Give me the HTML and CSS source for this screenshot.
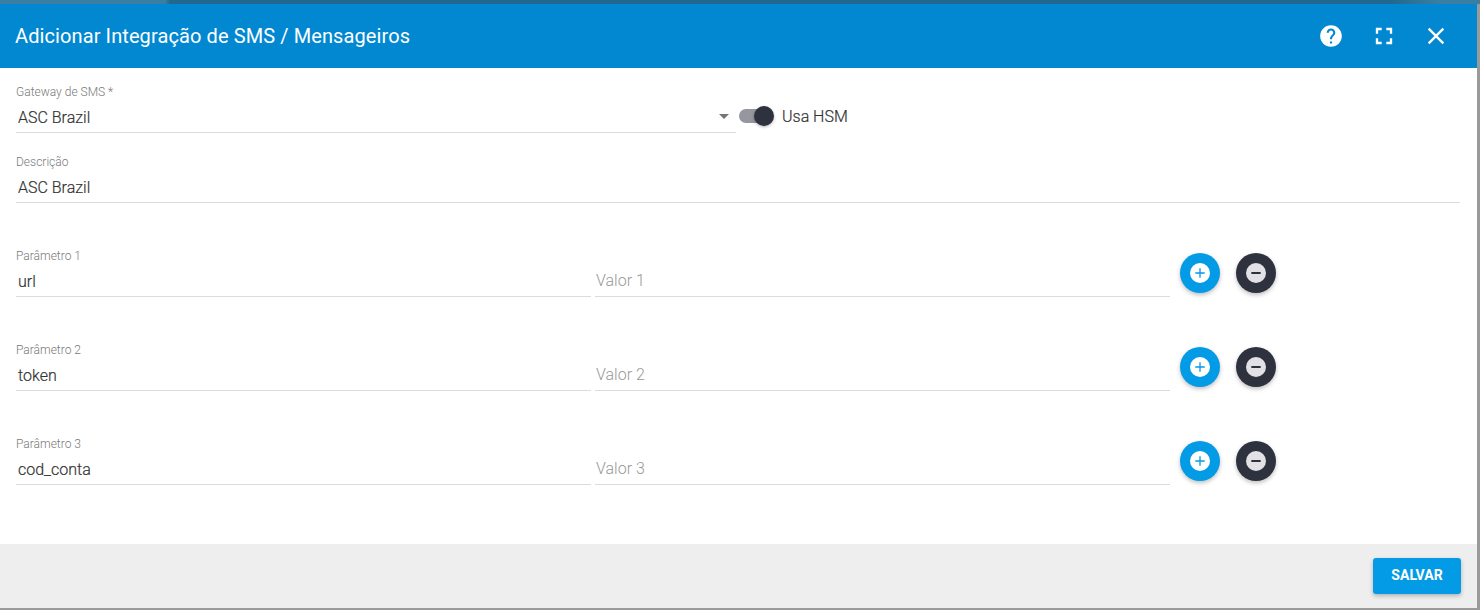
FILE: index.html
```html
<!DOCTYPE html>
<html lang="pt-BR">
<head>
    <meta charset="UTF-8">
    <title>Adicionar Integração</title>
    <link rel="stylesheet" href="styles.css">
</head>
<body>
    <div class="dialog">
        <header class="dialog-header">
            <h1>Adicionar Integração de SMS / Mensageiros</h1>
            <div class="header-icons">
                <svg class="icon icon-help" viewBox="0 0 24 24"><path fill="#fff" d="M12 2C6.48 2 2 6.48 2 12s4.48 10 10 10 10-4.48 10-10S17.52 2 12 2zm1 17h-2v-2h2v2zm2.07-7.75l-.9.92C13.45 12.9 13 13.5 13 15h-2v-.5c0-1.1.45-2.1 1.17-2.83l1.24-1.26c.37-.36.59-.86.59-1.41 0-1.1-.9-2-2-2s-2 .9-2 2H8c0-2.21 1.79-4 4-4s4 1.79 4 4c0 .88-.36 1.68-.93 2.25z"/></svg>
                <svg class="icon" viewBox="0 0 24 24"><path fill="#fff" d="M7 14H5v5h5v-2H7v-3zm-2-4h2V7h3V5H5v5zm12 7h-3v2h5v-5h-2v3zM14 5v2h3v3h2V5h-5z"/></svg>
                <svg class="icon" viewBox="0 0 24 24"><path fill="#fff" d="M19 6.41L17.59 5 12 10.59 6.41 5 5 6.41 10.59 12 5 17.59 6.41 19 12 13.41 17.59 19 19 17.59 13.41 12z"/></svg>
            </div>
        </header>

        <form class="dialog-body">
            <div class="row">
                <div class="field field-gateway">
                    <label>Gateway de SMS *</label>
                    <div class="value">ASC Brazil</div>
                    <span class="arrow"></span>
                </div>
                <div class="switch">
                    <span class="switch-track"></span>
                    <span class="switch-thumb"></span>
                </div>
                <span class="switch-label">Usa HSM</span>
            </div>

            <div class="row row-desc">
                <div class="field field-full">
                    <label>Descrição</label>
                    <div class="value">ASC Brazil</div>
                </div>
            </div>

            <div class="row row-param">
                <div class="field field-param">
                    <label>Parâmetro 1</label>
                    <div class="value">url</div>
                </div>
                <div class="field field-param">
                    <div class="placeholder">Valor 1</div>
                </div>
                <div class="actions">
                    <span class="round round-add"><span class="round-inner"><svg viewBox="0 0 24 24"><path fill="#039be5" d="M11 5h2v6h6v2h-6v6h-2v-6H5v-2h6z"/></svg></span></span>
                    <span class="round round-remove"><span class="round-inner"><svg viewBox="0 0 24 24"><path fill="#2d323e" d="M5 10.5h14v3H5z"/></svg></span></span>
                </div>
            </div>

            <div class="row row-param">
                <div class="field field-param">
                    <label>Parâmetro 2</label>
                    <div class="value">token</div>
                </div>
                <div class="field field-param">
                    <div class="placeholder">Valor 2</div>
                </div>
                <div class="actions">
                    <span class="round round-add"><span class="round-inner"><svg viewBox="0 0 24 24"><path fill="#039be5" d="M11 5h2v6h6v2h-6v6h-2v-6H5v-2h6z"/></svg></span></span>
                    <span class="round round-remove"><span class="round-inner"><svg viewBox="0 0 24 24"><path fill="#2d323e" d="M5 10.5h14v3H5z"/></svg></span></span>
                </div>
            </div>

            <div class="row row-param">
                <div class="field field-param">
                    <label>Parâmetro 3</label>
                    <div class="value">cod_conta</div>
                </div>
                <div class="field field-param">
                    <div class="placeholder">Valor 3</div>
                </div>
                <div class="actions">
                    <span class="round round-add"><span class="round-inner"><svg viewBox="0 0 24 24"><path fill="#039be5" d="M11 5h2v6h6v2h-6v6h-2v-6H5v-2h6z"/></svg></span></span>
                    <span class="round round-remove"><span class="round-inner"><svg viewBox="0 0 24 24"><path fill="#2d323e" d="M5 10.5h14v3H5z"/></svg></span></span>
                </div>
            </div>
        </form>

        <footer class="dialog-footer">
            <button type="button">SALVAR</button>
        </footer>
    </div>
</body>
</html>
```

FILE: styles.css
```css
* {
    margin: 0;
    padding: 0;
    box-sizing: border-box;
    font-family: Roboto, "Liberation Sans", sans-serif;
}

html, body {
    height: 610px;
    overflow: hidden;
}

body {
    background: #9a9a9a;
    padding-top: 4px;
    position: relative;
}

body::before {
    content: "";
    position: absolute;
    top: 0;
    left: 0;
    right: 0;
    height: 4px;
    background: linear-gradient(90deg, #3a7fa3 0, #3a7fa3 165px, #20688f 170px, #20688f 1390px, #3a7fa3 1440px);
}

.dialog {
    width: 1477px;
    height: 604px;
    display: flex;
    flex-direction: column;
    background: #fff;
}

.dialog-header {
    height: 64px;
    background: #0288d1;
    color: #fff;
    display: flex;
    align-items: center;
    justify-content: space-between;
    padding: 0 16px 1px 15px;
}

.dialog-header h1 {
    font-size: 20px;
    font-weight: 400;
    letter-spacing: 0.1px;
}

.header-icons {
    display: flex;
    align-items: center;
    gap: 24px;
    margin-right: 11px;
}

.icon {
    width: 28px;
    height: 28px;
    display: block;
}

.icon-help {
    width: 26px;
    height: 26px;
    margin-right: 2px;
}

.dialog-body {
    flex: 1;
    padding: 17px 17px 0 16px;
    display: flex;
    flex-direction: column;
}

.row {
    display: flex;
    align-items: center;
}

.row-desc {
    margin-top: 22px;
}

.row-param {
    margin-top: 46px;
}

.field {
    height: 48px;
    border-bottom: 1px solid #dcdcdc;
    position: relative;
    padding: 0 2px;
}

.field label {
    display: block;
    font-size: 12px;
    font-weight: 300;
    line-height: 14px;
    color: #7a7a7a;
    margin-left: -2px;
}

.value {
    font-size: 16px;
    font-weight: 300;
    -webkit-text-stroke: 0.2px #333;
    line-height: 20px;
    margin-top: 9px;
    color: #333;
}

.placeholder {
    font-size: 16px;
    font-weight: 300;
    line-height: 20px;
    margin-top: 22px;
    margin-left: -1px;
    color: #999;
}

.field-gateway {
    width: 720px;
}

.field-full {
    width: 100%;
}

.field-param {
    width: 575px;
}

.field-param + .field-param {
    margin-left: 4px;
}

.arrow {
    position: absolute;
    right: 7px;
    top: 29px;
    border-left: 5px solid transparent;
    border-right: 5px solid transparent;
    border-top: 5px solid #757575;
}

.switch {
    width: 35px;
    height: 20px;
    margin-left: 3px;
    margin-top: 14px;
    position: relative;
    flex-shrink: 0;
}

.switch-track {
    position: absolute;
    top: 3px;
    left: 0;
    width: 30px;
    height: 14px;
    border-radius: 7px;
    background: #96979e;
}

.switch-thumb {
    position: absolute;
    top: 0;
    right: 0;
    width: 20px;
    height: 20px;
    border-radius: 50%;
    background: #2d323e;
    box-shadow: 0 1px 3px rgba(0, 0, 0, 0.3);
}

.switch-label {
    margin-left: 8px;
    margin-top: 14px;
    font-size: 16px;
    font-weight: 300;
    -webkit-text-stroke: 0.2px #333;
    color: #333;
}

.actions {
    display: flex;
    gap: 16px;
    margin-left: 10px;
}

.round {
    width: 40px;
    height: 40px;
    border-radius: 50%;
    display: flex;
    align-items: center;
    justify-content: center;
    box-shadow: 0 2px 4px rgba(0, 0, 0, 0.25);
}

.round-add {
    background: #039be5;
}

.round-remove {
    background: #2d323e;
}

.round-inner {
    width: 20px;
    height: 20px;
    border-radius: 50%;
    background: #fff;
    display: flex;
    align-items: center;
    justify-content: center;
}

.round-remove .round-inner {
    background: #e2e2e6;
}

.round-inner svg {
    width: 16px;
    height: 16px;
}

.dialog-footer {
    height: 64px;
    background: #eee;
    display: flex;
    align-items: center;
    justify-content: flex-end;
    padding-right: 16px;
}

.dialog-footer button {
    width: 88px;
    height: 36px;
    border: none;
    border-radius: 3px;
    padding-bottom: 2px;
    background: #039be5;
    color: #fff;
    font-size: 14px;
    font-weight: 700;
    box-shadow: 0 2px 4px rgba(0, 0, 0, 0.25);
}
```
